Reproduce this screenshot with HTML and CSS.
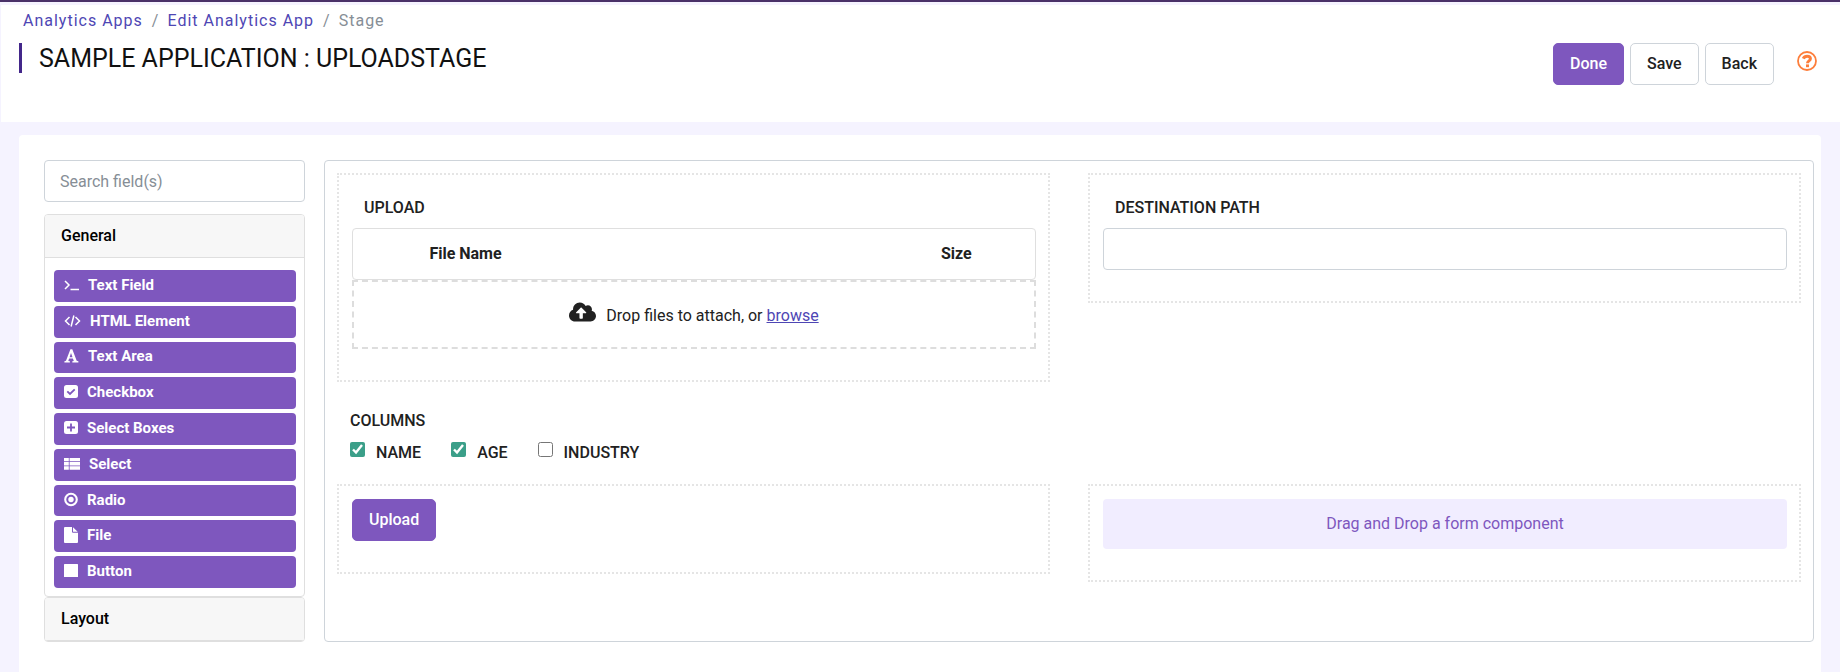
FILE: index.html
```html
<!DOCTYPE html>
<html lang="en">
<head>
<meta charset="utf-8">
<title>Sample Application : UploadStage</title>
<link rel="stylesheet" href="styles.css">
</head>
<body>
<header class="header">
  <div class="heading">
    <nav class="breadcrumb" aria-label="Breadcrumb">
      <a href="#">Analytics Apps</a><span class="sep">/</span><a href="#">Edit Analytics App</a><span class="sep">/</span><span>Stage</span>
    </nav>
    <h1 class="title">SAMPLE APPLICATION : UPLOADSTAGE</h1>
  </div>
  <div class="actions">
    <button type="button" class="btn primary">Done</button>
    <button type="button" class="btn">Save</button>
    <button type="button" class="btn">Back</button>
    <a class="help" href="#" aria-label="Help">
      <svg width="20" height="20" viewBox="0 0 20 20" fill="none" stroke="currentColor"><circle cx="10" cy="10" r="9" stroke-width="1.800"/><path d="M6.300 7.600C7.100 5.800 8.400 5.200 10.100 5.200c2 0 3.300 1 3.300 2.600 0 2.200-2.900 2-2.900 4.400" stroke-width="3"/><path d="M9 14.800h3" stroke-width="2.800"/></svg>
    </a>
  </div>
</header>
<main class="panel">
  <aside class="sidebar">
    <input class="input search" type="search" placeholder="Search field(s)" aria-label="Search field(s)">
    <section class="card">
      <button type="button" class="card-head">General</button>
      <div class="items">
        <button type="button" class="item"><svg width="15" height="16" viewBox="0 0 15 16" fill="none" stroke="currentColor" stroke-width="1.500"><path d="M1 4l4 4-4 4M6.500 12.500H15"/></svg>Text Field</button>
        <button type="button" class="item"><svg width="17" height="16" viewBox="0 0 17 16" fill="none" stroke="currentColor" stroke-width="1.500"><path d="M5.500 4l-4 4 4 4M11.500 4l4 4-4 4M9.900 2.500l-2.800 11"/></svg>HTML Element</button>
        <button type="button" class="item"><svg width="15" height="16" viewBox="0 0 15 16" fill="currentColor"><path fill-rule="evenodd" d="M6.400 1.200h1.900l4.400 11.600 1.700.5v1.200H8.300v-1.200l1.500-.4-.9-2.400H5.100l-.8 2.400 1.600.4v1.200H.4v-1.200l1.600-.5zM7 5.100L5.600 9.200h2.900z"/></svg>Text Area</button>
        <button type="button" class="item"><svg width="14" height="16" viewBox="0 0 14 16"><rect y="1" width="14" height="13" rx="2.500" fill="currentColor"/><path d="M3.300 7.300l2.700 2.700 4.700-4.700" fill="none" stroke="#7e57be" stroke-width="1.800"/></svg>Checkbox</button>
        <button type="button" class="item"><svg width="14" height="16" viewBox="0 0 14 16"><rect y="1" width="14" height="13" rx="2.500" fill="currentColor"/><path d="M3 7.500h8M7 3.500v8" stroke="#7e57be" stroke-width="1.800"/></svg>Select Boxes</button>
        <button type="button" class="item"><svg width="16" height="16" viewBox="0 0 16 16" fill="currentColor"><path d="M0 2h4.800v3.300H0zM5.600 2H16v3.300H5.600zM0 6.100h4.800v3.300H0zM5.600 6.100H16v3.300H5.600zM0 10.200h4.800v3.500H0zM5.600 10.200H16v3.500H5.600z"/></svg>Select</button>
        <button type="button" class="item"><svg width="14" height="16" viewBox="0 0 14 16"><circle cx="7" cy="7.500" r="5.800" fill="none" stroke="currentColor" stroke-width="2.100"/><circle cx="7" cy="7.500" r="2.700" fill="currentColor"/></svg>Radio</button>
        <button type="button" class="item"><svg width="14" height="16" viewBox="0 0 14 16" fill="currentColor"><path d="M0 1q0-1 1-1h7v4.700q0 1 1 1h5V15q0 1-1 1H1q-1 0-1-1zM9 .2l4.700 4.500H9z"/></svg>File</button>
        <button type="button" class="item"><svg width="14" height="16" viewBox="0 0 14 16" fill="currentColor"><rect y="1" width="14" height="13" rx="0.500"/></svg>Button</button>
      </div>
    </section>
    <section class="card closed">
      <button type="button" class="card-head">Layout</button>
    </section>
  </aside>
  <form class="canvas">
    <div class="row">
      <section class="drop-cell">
        <h2 class="label">UPLOAD</h2>
        <table class="files">
          <thead><tr><th class="col-action"></th><th>File Name</th><th class="col-size">Size</th></tr></thead>
        </table>
        <div class="dropzone">
          <svg width="27" height="22" viewBox="0 0 640 512" fill="currentColor"><path d="M537.600 226.600c4.100-10.700 6.400-22.400 6.400-34.600 0-53-43-96-96-96-19.700 0-38.100 6-53.300 16.200C367 64.200 315.300 32 256 32c-88.400 0-160 71.600-160 160 0 2.700.1 5.400.2 8.100C40.200 219.800 0 273.200 0 336c0 79.500 64.500 144 144 144h368c70.700 0 128-57.300 128-128 0-61.900-44-113.600-102.400-125.400zM393.400 288H328v112c0 8.800-7.200 16-16 16h-48c-8.800 0-16-7.200-16-16V288h-65.400c-14.300 0-21.400-17.200-11.300-27.400l105.400-105.400c6.200-6.200 16.400-6.200 22.600 0l105.400 105.400c10.100 10.200 2.900 27.400-11.300 27.400z"/></svg>
          <span class="drop-text">Drop files to attach, or <a href="#">browse</a></span>
        </div>
      </section>
      <section class="drop-cell">
        <label class="label" for="destination">DESTINATION PATH</label>
        <input class="input" id="destination" type="text">
      </section>
    </div>
    <fieldset class="columns">
      <legend>COLUMNS</legend>
      <div class="checks">
        <label class="check"><input type="checkbox" checked><span>NAME</span></label>
        <label class="check"><input type="checkbox" checked><span>AGE</span></label>
        <label class="check"><input type="checkbox"><span>INDUSTRY</span></label>
      </div>
    </fieldset>
    <div class="row">
      <section class="drop-cell">
        <button type="button" class="btn primary">Upload</button>
      </section>
      <section class="drop-cell">
        <div class="placeholder">Drag and Drop a form component</div>
      </section>
    </div>
  </form>
</main>
</body>
</html>
```
FILE: styles.css
```css
* {
  box-sizing: border-box;
}

body {
  margin: 0;
  min-height: 100vh;
  display: flex;
  flex-direction: column;
  border-top: 2px solid #4a3168;
  background: #f5f3ff;
  color: #212121;
  font: 16px/24px Roboto, "Liberation Sans", sans-serif;
}

button,
input {
  font: inherit;
  color: inherit;
}

a {
  color: #4e46b4;
}

svg {
  flex: none;
}

.header {
  display: flex;
  justify-content: space-between;
  align-items: flex-start;
  margin: 3px 0 13px 1px;
  padding: 4px 23px 37px 18px;
  background: #fff;
}

.breadcrumb {
  padding-left: 4px;
  color: #868e96;
  letter-spacing: 1px;
}

.breadcrumb a {
  text-decoration: none;
}

.sep {
  margin: 0 8px 0 9px;
}

.title {
  margin: 10px 0 0;
  padding: 1px 0 0 17px;
  border-left: 3px solid #43278a;
  color: #111;
  font-size: 25px;
  font-weight: 400;
  line-height: 29px;
}

.actions {
  display: flex;
  gap: 6px;
  padding-top: 34px;
}

.btn {
  height: 42px;
  padding: 0 16px;
  border: 1px solid #ced4da;
  border-radius: 5px;
  background: #fff;
  font-weight: 500;
}

.btn.primary {
  border-color: #7e57be;
  background: #7e57be;
  color: #fff;
}

.help {
  height: 20px;
  margin: 8px 0 0 17px;
  color: #fd7e3b;
}

.help svg {
  display: block;
}

.panel {
  flex: 1;
  display: flex;
  align-items: flex-start;
  gap: 19px;
  margin: 0 19px;
  padding: 25px 7px 31px 25px;
  border-radius: 4px 4px 0 0;
  background: #fff;
}

.sidebar {
  flex: none;
  align-self: stretch;
  width: 261px;
  display: flex;
  flex-direction: column;
}

.input {
  display: block;
  width: 100%;
  height: 42px;
  padding: 0 15px;
  border: 1px solid #ced4da;
  border-radius: 4px;
  background: #fff;
  outline: none;
}

.input::placeholder {
  color: #868e96;
  opacity: 1;
}

.search {
  flex: none;
  margin-bottom: 12px;
}

.card {
  flex: 1;
  display: flex;
  flex-direction: column;
  border: 1px solid #dfdfdf;
  border-radius: 4px;
  overflow: hidden;
}

.card.closed {
  flex: none;
}

.card-head {
  height: 43px;
  padding: 0 16px;
  border: 0;
  border-bottom: 1px solid #dfdfdf;
  background: #f7f7f7;
  color: #000;
  font-weight: 500;
  text-align: left;
}

.items {
  flex: 1;
  display: grid;
  grid-auto-rows: 1fr;
  gap: 4px;
  padding: 12px 8px 8px 9px;
}

.item {
  display: flex;
  align-items: center;
  gap: 9px;
  padding: 0 10px 2px;
  border: 0;
  border-radius: 4px;
  background: #7e57be;
  color: #fff;
  font-size: 15px;
  font-weight: 700;
  line-height: 22px;
}

.canvas {
  flex: 1;
  min-width: 0;
  padding: 12px 12px 59px;
  border: 1px solid #ced4da;
  border-radius: 4px;
}

.row {
  display: grid;
  grid-template-columns: 1fr 1fr;
  gap: 38px;
  align-items: start;
}

.drop-cell {
  padding: 13px 12px 31px 13px;
  border: 2px dotted #e5e5e5;
}

.label {
  display: block;
  margin: 8px 0;
  padding-left: 12px;
  font-size: 16px;
  font-weight: 500;
}

.files {
  width: 100%;
  height: 52px;
  border: 1px solid #dfdfdf;
  border-radius: 4px;
  border-spacing: 0;
  table-layout: fixed;
}

.files th {
  padding: 0 15px;
  font-weight: 700;
  text-align: left;
}

.files .col-action {
  width: 9%;
}

.files .col-size {
  width: 16%;
}

.dropzone {
  display: flex;
  justify-content: center;
  align-items: flex-start;
  gap: 10px;
  padding: 19px;
  border: 2px dashed #ddd;
}

.drop-text {
  padding-top: 3px;
}

.columns {
  margin: 0;
  padding: 27px 13px 19px;
  border: 0;
}

.columns legend {
  float: left;
  width: 100%;
  padding: 0;
  font-weight: 500;
}

.checks {
  clear: both;
  display: flex;
  gap: 30px;
  padding-top: 8px;
}

.check {
  display: flex;
  align-items: flex-start;
  gap: 11px;
  font-weight: 500;
}

.check input {
  width: 15px;
  height: 15px;
  margin: 1px 0 0;
  accent-color: #3b9f89;
}

.placeholder {
  padding: 13px;
  border-radius: 4px;
  background: #f1edff;
  color: #7e57be;
  text-align: center;
}
```
